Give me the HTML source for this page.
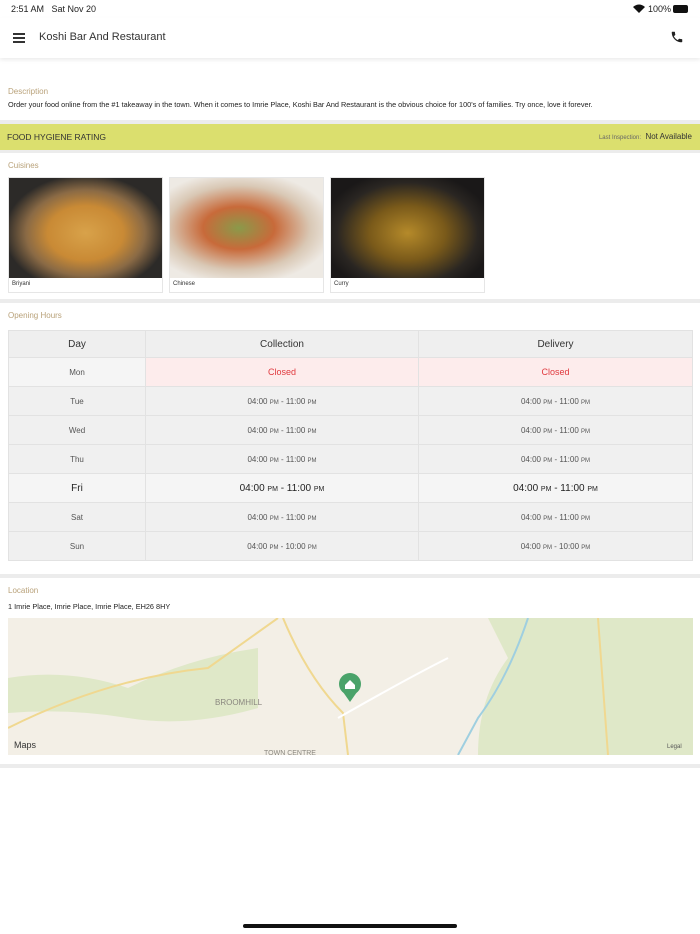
<!DOCTYPE html>
<html><head><meta charset="utf-8"><style>
*{margin:0;padding:0;box-sizing:border-box}
body{width:700px;height:934px;background:#fff;font-family:"Liberation Sans",sans-serif;color:#222;position:relative;overflow:hidden}
.abs{position:absolute}
.lbl{position:absolute;left:8px;font-size:8px;color:#b9a27a}
.sep{position:absolute;left:0;width:700px;background:#ececec}
table{border-collapse:collapse;position:absolute;left:8px;top:330px;width:685px;font-size:8px;color:#555}
td{border:1px solid #e2e2e2;text-align:center;height:29px;background:#f5f5f5}
tr.h td{background:#efefef;font-size:10px;color:#333;height:27px}
tr.c td.x{background:#fdecec;color:#e0393e;font-size:9px}
tr.f td{font-size:10px;color:#222}
tr.alt td{background:#f0f0f0}
small{font-size:6px}
.card{position:absolute;top:177px;width:155px;height:116px;border:1px solid #e6e6e6;background:#fff}
.card div{height:100px}
.card span{position:absolute;left:3px;top:103px;font-size:6px;color:#333}
</style></head><body>
<div class="abs" style="left:11px;top:4px;font-size:9px">2:51 AM&nbsp;&nbsp; Sat Nov 20</div>
<div class="abs" style="left:648px;top:4px;font-size:9px">100%</div>
<svg class="abs" style="left:633px;top:4px" width="12" height="9" viewBox="0 0 12 9"><path d="M6 9 L0 3 Q6 -2 12 3Z" fill="#111"/></svg>
<div class="abs" style="left:673px;top:5px;width:15px;height:8px;background:#111;border-radius:2px"></div>
<div class="abs" style="left:0;top:18px;width:700px;height:40px;background:#fff;box-shadow:0 2px 4px rgba(0,0,0,.08)"></div>
<div class="abs" style="left:13px;top:33px;width:12px;height:1.5px;background:#333;box-shadow:0 4px 0 #333,0 8px 0 #333"></div>
<div class="abs" style="left:39px;top:31px;font-size:11px;color:#333">Koshi Bar And Restaurant</div>
<svg class="abs" style="left:670px;top:30px" width="14" height="14" viewBox="0 0 24 24"><path fill="#222" d="M6.6 10.8c1.4 2.8 3.8 5.1 6.6 6.6l2.2-2.2c.3-.3.7-.4 1-.2 1.1.4 2.3.6 3.6.6.6 0 1 .4 1 1V20c0 .6-.4 1-1 1C10.6 21 3 13.4 3 4c0-.6.4-1 1-1h3.5c.6 0 1 .4 1 1 0 1.3.2 2.5.6 3.6.1.3 0 .7-.2 1z"/></svg>
<div class="lbl" style="top:87px">Description</div>
<div class="abs" style="left:8px;top:100px;font-size:7.3px;color:#222">Order your food online from the #1 takeaway in the town. When it comes to Imrie Place, Koshi Bar And Restaurant is the obvious choice for 100's of families. Try once, love it forever.</div>
<div class="sep" style="top:120px;height:4px"></div>
<div class="abs" style="left:0;top:124px;width:700px;height:26px;background:#dbdf6e"></div>
<div class="abs" style="left:7px;top:132px;font-size:8.5px;color:#333">FOOD HYGIENE RATING</div>
<div class="abs" style="right:8px;top:132px;font-size:8px;color:#333"><span style="font-size:6px;color:#666">Last Inspection:</span>&nbsp; Not Available</div>
<div class="sep" style="top:150px;height:3px"></div>
<div class="lbl" style="top:161px">Cuisines</div>
<div class="card" style="left:8px"><div style="background:radial-gradient(ellipse at 50% 55%,#d8a24a 0,#c98a35 35%,#8a6a45 55%,#2c2a28 75%)"></div><span>Briyani</span></div>
<div class="card" style="left:169px"><div style="background:radial-gradient(ellipse at 45% 50%,#8a9a4a 0,#c86a3a 30%,#d9c8b5 60%,#eeeae4 80%)"></div><span>Chinese</span></div>
<div class="card" style="left:330px"><div style="background:radial-gradient(ellipse at 50% 55%,#b58a2a 0,#7a5a1a 35%,#2a2622 65%,#1a1818 80%)"></div><span>Curry</span></div>
<div class="sep" style="top:299px;height:4px"></div>
<div class="lbl" style="top:311px">Opening Hours</div>
<table>
<tr class="h"><td style="width:137px">Day</td><td style="width:273px">Collection</td><td>Delivery</td></tr>
<tr class="c"><td>Mon</td><td class="x">Closed</td><td class="x">Closed</td></tr>
<tr class="alt"><td>Tue</td><td>04:00 <small>PM</small> - 11:00 <small>PM</small></td><td>04:00 <small>PM</small> - 11:00 <small>PM</small></td></tr>
<tr class="alt"><td>Wed</td><td>04:00 <small>PM</small> - 11:00 <small>PM</small></td><td>04:00 <small>PM</small> - 11:00 <small>PM</small></td></tr>
<tr class="alt"><td>Thu</td><td>04:00 <small>PM</small> - 11:00 <small>PM</small></td><td>04:00 <small>PM</small> - 11:00 <small>PM</small></td></tr>
<tr class="f"><td>Fri</td><td>04:00 <small style="font-size:7px">PM</small> - 11:00 <small style="font-size:7px">PM</small></td><td>04:00 <small style="font-size:7px">PM</small> - 11:00 <small style="font-size:7px">PM</small></td></tr>
<tr class="alt"><td>Sat</td><td>04:00 <small>PM</small> - 11:00 <small>PM</small></td><td>04:00 <small>PM</small> - 11:00 <small>PM</small></td></tr>
<tr class="alt"><td>Sun</td><td>04:00 <small>PM</small> - 10:00 <small>PM</small></td><td>04:00 <small>PM</small> - 10:00 <small>PM</small></td></tr>
</table>
<div class="sep" style="top:574px;height:4px"></div>
<div class="lbl" style="top:586px">Location</div>
<div class="abs" style="left:8px;top:602px;font-size:7.3px">1 Imrie Place, Imrie Place, Imrie Place, EH26 8HY</div>
<svg class="abs" style="left:8px;top:618px" width="685" height="137" viewBox="0 0 685 137">
<rect width="685" height="137" fill="#f3efe6"/>
<path d="M0 60 Q60 50 120 70 Q180 40 250 30 L250 90 Q180 110 120 100 Q60 90 0 95Z" fill="#dfe8c8"/>
<path d="M480 0 L685 0 L685 137 L470 137 Q470 80 500 40Z" fill="#dfe8c8"/>
<path d="M520 0 Q500 60 470 100 L450 137" stroke="#9fcfe0" stroke-width="2" fill="none"/>
<path d="M0 110 Q100 60 200 50 L270 0" stroke="#f0d890" stroke-width="2" fill="none"/>
<path d="M275 0 Q300 60 335 95 L340 137" stroke="#f0d890" stroke-width="2" fill="none"/>
<path d="M590 0 L600 137" stroke="#f0d890" stroke-width="2" fill="none"/>
<path d="M330 100 Q400 60 440 40" stroke="#fff" stroke-width="2" fill="none"/>
<circle cx="342" cy="66" r="11" fill="#4aa36a"/><path d="M335 74 L342 84 L349 74Z" fill="#4aa36a"/>
<path d="M337 67 L342 62 L347 67 V71 H337Z" fill="#fff"/>
<text x="207" y="87" font-size="8" fill="#8a877f" font-family="Liberation Sans">BROOMHILL</text>
<text x="256" y="137" font-size="7" fill="#8a877f" font-family="Liberation Sans">TOWN CENTRE</text>
<text x="6" y="130" font-size="9" fill="#333" font-family="Liberation Sans"> Maps</text>
<text x="659" y="130" font-size="6" fill="#555" font-family="Liberation Sans">Legal</text>
</svg>
<div class="sep" style="top:764px;height:4px"></div>
<div class="abs" style="left:243px;top:924px;width:214px;height:4px;border-radius:2px;background:#111"></div>
</body></html>
